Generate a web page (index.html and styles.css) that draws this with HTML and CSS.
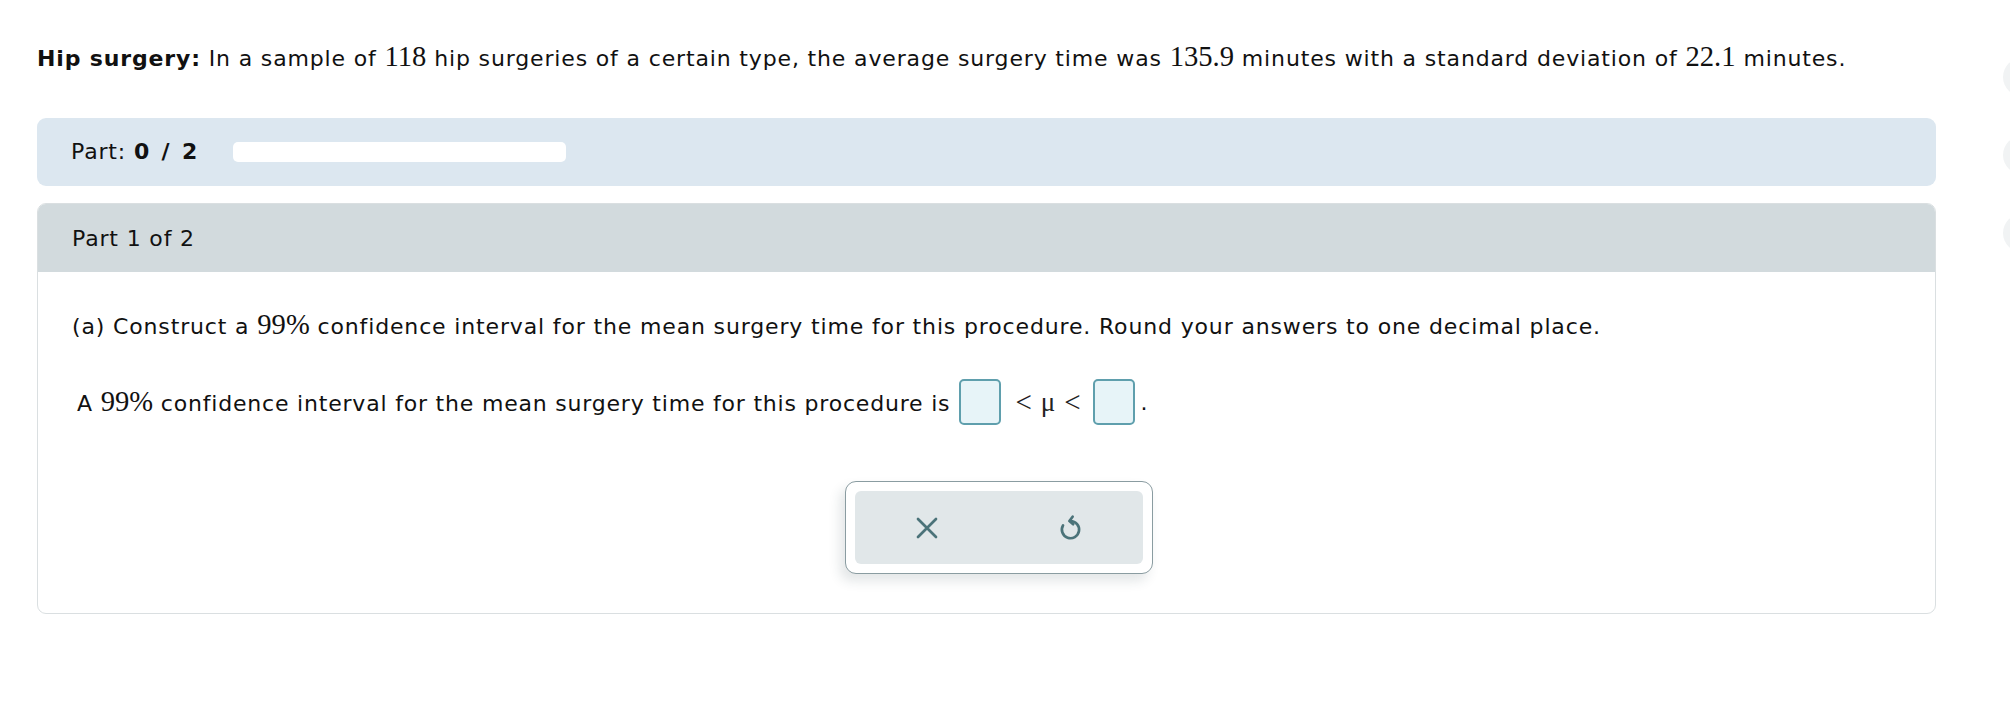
FILE: index.html
```html
<!DOCTYPE html>
<html>
<head>
<meta charset="utf-8">
<link rel="stylesheet" href="styles.css">
</head>
<body>
<div class="page">
  <main class="main">
    <p class="intro"><b>Hip surgery:</b> In a sample of <span class="m">118</span> hip surgeries of a certain type, the average surgery time was <span class="m">135.9</span> minutes with a standard deviation of <span class="m">22.1</span> minutes.</p>

    <div class="progress">
      <span class="plabel">Part: <b>0 / 2</b></span>
      <span class="pbar"></span>
    </div>

    <section class="card">
      <div class="card-head">Part 1 of 2</div>
      <div class="card-body">
        <p class="q">(a) Construct a <span class="m">99%</span> confidence interval for the mean surgery time for this procedure. Round your answers to one decimal place.</p>
        <div class="answer">
          <span class="atext">A <span class="m">99%</span> confidence interval for the mean surgery time for this procedure is</span>
          <span class="box"></span>
          <span class="m rel"><span>&lt;</span><span class="mu">μ</span><span>&lt;</span></span>
          <span class="box"></span>
          <span class="dot">.</span>
        </div>
        <div class="actions">
          <div class="btn-group">
            <div class="btn-inner">
              <button class="btn" aria-label="Clear">
                <svg width="24" height="24" viewBox="0 0 24 24" fill="none" stroke="#4b7379" stroke-width="2.7" stroke-linecap="round"><path d="M3 3L21 21M21 3L3 21"/></svg>
              </button>
              <button class="btn" aria-label="Undo">
                <svg width="26" height="28" viewBox="0 0 24 26" fill="none" stroke="#4b7379" stroke-width="2.5" stroke-linecap="round" stroke-linejoin="round"><path d="M11.5 6.5A8 8 0 1 1 4.6 10.5"/><path d="M13.5 2.5L10.5 6.5L14 9.5"/></svg>
              </button>
            </div>
          </div>
        </div>
      </div>
    </section>
  </main>
  <aside class="side">
    <span class="dotc"></span>
    <span class="dotc"></span>
    <span class="dotc"></span>
  </aside>
</div>
</body>
</html>
```

FILE: styles.css
```css
html, body {
  margin: 0;
  padding: 0;
  background: #ffffff;
  overflow: hidden;
}
body {
  font-family: "DejaVu Sans", Verdana, sans-serif;
  font-size: 22px;
  letter-spacing: 0.85px;
  color: #111;
}
.page {
  display: flex;
  align-items: flex-start;
  width: 2010px;
}
.main {
  width: 1899px;
  margin-left: 37px;
  padding-top: 42px;
  flex: none;
}
.intro {
  margin: 0;
  line-height: 33px;
}
.m {
  font-family: "Liberation Serif", "Times New Roman", serif;
  font-size: 1.3em;
  letter-spacing: 0;
  line-height: 1;
}
.progress {
  margin-top: 43px;
  height: 68px;
  background: #dce7f0;
  border-radius: 9px;
  display: flex;
  align-items: center;
  padding-left: 34px;
}
.plabel {
  line-height: 1;
}
.plabel b {
  word-spacing: 3px;
}
.pbar {
  margin-left: 35px;
  width: 333px;
  height: 20px;
  background: #ffffff;
  border-radius: 5px;
}
.card {
  margin-top: 17px;
  border: 1px solid #dadfe1;
  border-radius: 9px;
  overflow: hidden;
}
.card-head {
  height: 68px;
  background: #d2dadd;
  display: flex;
  align-items: center;
  padding-left: 34px;
}
.card-body {
  padding: 38px 0 39px 34px;
}
.q {
  margin: 0;
  line-height: 33px;
}
.answer {
  margin-top: 36px;
  display: flex;
  align-items: center;
  height: 46px;
  padding-left: 5px;
}
.atext {
  white-space: nowrap;
  letter-spacing: 0.8px;
}
.box {
  width: 38px;
  height: 42px;
  border: 2px solid #5f9fad;
  border-radius: 5px;
  background: #e7f4f8;
  margin-left: 9px;
  flex: none;
}
.rel {
  display: flex;
  align-items: center;
  gap: 9px;
  margin: 0 3px 0 14px;
  font-size: 29px;
  color: #222;
}
.mu {
  font-size: 27px;
}
.dot {
  margin-left: 6px;
}
.actions {
  margin-top: 56px;
  padding-left: 773px;
}
.btn-group {
  width: 288px;
  padding: 9px;
  border: 1px solid #8a9ca1;
  border-radius: 11px;
  background: #fff;
  box-shadow: -5px 7px 12px rgba(40, 60, 70, 0.13);
}
.btn-inner {
  height: 73px;
  background: #e1e7e9;
  border-radius: 6px;
  display: flex;
}
.btn {
  flex: 1;
  border: 0;
  background: transparent;
  display: flex;
  align-items: center;
  justify-content: center;
  padding: 0;
}
.side {
  flex: none;
  display: flex;
  flex-direction: column;
  gap: 40px;
  padding-top: 58px;
  margin-left: 67px;
}
.dotc {
  width: 38px;
  height: 38px;
  border-radius: 50%;
  background: #f1f3f4;
}
```
